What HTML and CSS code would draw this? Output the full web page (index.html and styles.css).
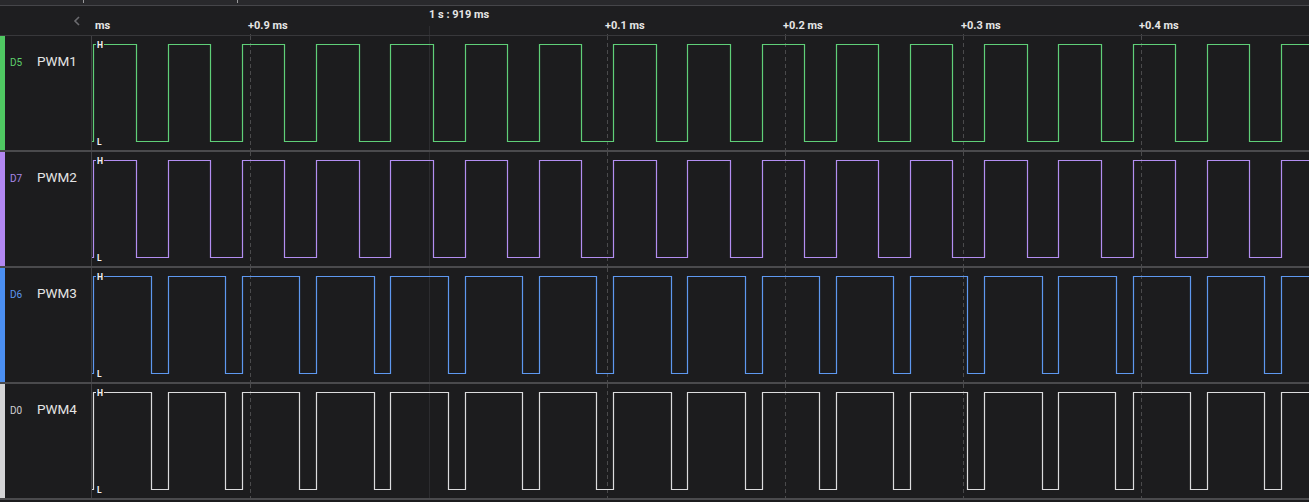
FILE: index.html
```
<!DOCTYPE html>
<html lang="en">
<head>
<meta charset="utf-8">
<title>Logic analyzer</title>
<link rel="stylesheet" href="styles.css">
</head>
<body>
<div class="top"><span class="mark m1"></span><span class="mark m2"></span></div>
<div class="header">
  <div class="hlabel">
    <svg class="chev" width="8" height="10" viewBox="0 0 8 10"><polyline points="6,1 2,5 6,9" /></svg>
  </div>
  <div class="axis">
    <svg class="axis-grid" width="1217" height="29" viewBox="92 0 1217 29">
      <line class="dash" x1="250.5" y1="21" x2="250.5" y2="29"/>
      <line class="ref" x1="429.5" y1="20" x2="429.5" y2="29"/>
      <line class="dash" x1="607.5" y1="21" x2="607.5" y2="29"/>
      <line class="dash" x1="785.5" y1="21" x2="785.5" y2="29"/>
      <line class="dash" x1="963.5" y1="21" x2="963.5" y2="29"/>
      <line class="dash" x1="1141.5" y1="21" x2="1141.5" y2="29"/>
    </svg>
    <span class="tick t-ms">ms</span>
    <span class="tick t-09">+0.9 ms</span>
    <span class="tick ref-label">1 s : 919 ms</span>
    <span class="tick t-01">+0.1 ms</span>
    <span class="tick t-02">+0.2 ms</span>
    <span class="tick t-03">+0.3 ms</span>
    <span class="tick t-04">+0.4 ms</span>
  </div>
</div>

<div class="row green">
  <div class="label"><span class="ch">D5</span><span class="name">PWM1</span></div>
  <svg class="plot" width="1217" height="114" viewBox="92 0 1217 114">
    <g class="grid">
      <line class="ref" x1="429.5" y1="0" x2="429.5" y2="114"/>
      <line class="dash" x1="250.5" y1="0" x2="250.5" y2="114"/>
      <line class="dash" x1="607.5" y1="0" x2="607.5" y2="114"/>
      <line class="dash" x1="785.5" y1="0" x2="785.5" y2="114"/>
      <line class="dash" x1="963.5" y1="0" x2="963.5" y2="114"/>
      <line class="dash" x1="1141.5" y1="0" x2="1141.5" y2="114"/>
    </g>
    <path class="sig" d="M92 105.5 H93.5 V8.5 H136.5 V105.5 H168.5 V8.5 H210.5 V105.5 H242.5 V8.5 H284.5 V105.5 H316.5 V8.5 H359.5 V105.5 H390.5 V8.5 H433.5 V105.5 H465.5 V8.5 H507.5 V105.5 H539.5 V8.5 H581.5 V105.5 H613.5 V8.5 H656.5 V105.5 H687.5 V8.5 H730.5 V105.5 H762.5 V8.5 H804.5 V105.5 H836.5 V8.5 H878.5 V105.5 H910.5 V8.5 H952.5 V105.5 H984.5 V8.5 H1027.5 V105.5 H1058.5 V8.5 H1101.5 V105.5 H1133.5 V8.5 H1175.5 V105.5 H1207.5 V8.5 H1249.5 V105.5 H1281.5 V8.5 H1312"/>
    <rect class="lvl-bg" x="96" y="5" width="8" height="7"/>
    <text class="lvl" x="97" y="11.5">H</text>
    <text class="lvl" x="97" y="109">L</text>
  </svg>
</div>

<div class="row purple">
  <div class="label"><span class="ch">D7</span><span class="name">PWM2</span></div>
  <svg class="plot" width="1217" height="114" viewBox="92 0 1217 114">
    <g class="grid">
      <line class="ref" x1="429.5" y1="0" x2="429.5" y2="114"/>
      <line class="dash" x1="250.5" y1="0" x2="250.5" y2="114"/>
      <line class="dash" x1="607.5" y1="0" x2="607.5" y2="114"/>
      <line class="dash" x1="785.5" y1="0" x2="785.5" y2="114"/>
      <line class="dash" x1="963.5" y1="0" x2="963.5" y2="114"/>
      <line class="dash" x1="1141.5" y1="0" x2="1141.5" y2="114"/>
    </g>
    <path class="sig" d="M92 105.5 H93.5 V8.5 H136.5 V105.5 H168.5 V8.5 H210.5 V105.5 H242.5 V8.5 H284.5 V105.5 H316.5 V8.5 H359.5 V105.5 H390.5 V8.5 H433.5 V105.5 H465.5 V8.5 H507.5 V105.5 H539.5 V8.5 H581.5 V105.5 H613.5 V8.5 H656.5 V105.5 H687.5 V8.5 H730.5 V105.5 H762.5 V8.5 H804.5 V105.5 H836.5 V8.5 H878.5 V105.5 H910.5 V8.5 H952.5 V105.5 H984.5 V8.5 H1027.5 V105.5 H1058.5 V8.5 H1101.5 V105.5 H1133.5 V8.5 H1175.5 V105.5 H1207.5 V8.5 H1249.5 V105.5 H1281.5 V8.5 H1312"/>
    <rect class="lvl-bg" x="96" y="5" width="8" height="7"/>
    <text class="lvl" x="97" y="11.5">H</text>
    <text class="lvl" x="97" y="109">L</text>
  </svg>
</div>

<div class="row blue">
  <div class="label"><span class="ch">D6</span><span class="name">PWM3</span></div>
  <svg class="plot" width="1217" height="114" viewBox="92 0 1217 114">
    <g class="grid">
      <line class="ref" x1="429.5" y1="0" x2="429.5" y2="114"/>
      <line class="dash" x1="250.5" y1="0" x2="250.5" y2="114"/>
      <line class="dash" x1="607.5" y1="0" x2="607.5" y2="114"/>
      <line class="dash" x1="785.5" y1="0" x2="785.5" y2="114"/>
      <line class="dash" x1="963.5" y1="0" x2="963.5" y2="114"/>
      <line class="dash" x1="1141.5" y1="0" x2="1141.5" y2="114"/>
    </g>
    <path class="sig" d="M92 105.5 H93.5 V8.5 H151.5 V105.5 H168.5 V8.5 H225.5 V105.5 H242.5 V8.5 H299.5 V105.5 H316.5 V8.5 H374.5 V105.5 H390.5 V8.5 H448.5 V105.5 H465.5 V8.5 H522.5 V105.5 H539.5 V8.5 H596.5 V105.5 H613.5 V8.5 H671.5 V105.5 H687.5 V8.5 H745.5 V105.5 H762.5 V8.5 H819.5 V105.5 H836.5 V8.5 H893.5 V105.5 H910.5 V8.5 H967.5 V105.5 H984.5 V8.5 H1042.5 V105.5 H1058.5 V8.5 H1116.5 V105.5 H1133.5 V8.5 H1190.5 V105.5 H1207.5 V8.5 H1264.5 V105.5 H1281.5 V8.5 H1312"/>
    <rect class="lvl-bg" x="96" y="5" width="8" height="7"/>
    <text class="lvl" x="97" y="11.5">H</text>
    <text class="lvl" x="97" y="109">L</text>
  </svg>
</div>

<div class="row grey">
  <div class="label"><span class="ch">D0</span><span class="name">PWM4</span></div>
  <svg class="plot" width="1217" height="114" viewBox="92 0 1217 114">
    <g class="grid">
      <line class="ref" x1="429.5" y1="0" x2="429.5" y2="114"/>
      <line class="dash" x1="250.5" y1="0" x2="250.5" y2="114"/>
      <line class="dash" x1="607.5" y1="0" x2="607.5" y2="114"/>
      <line class="dash" x1="785.5" y1="0" x2="785.5" y2="114"/>
      <line class="dash" x1="963.5" y1="0" x2="963.5" y2="114"/>
      <line class="dash" x1="1141.5" y1="0" x2="1141.5" y2="114"/>
    </g>
    <path class="sig" d="M92 105.5 H93.5 V8.5 H151.5 V105.5 H168.5 V8.5 H225.5 V105.5 H242.5 V8.5 H299.5 V105.5 H316.5 V8.5 H374.5 V105.5 H390.5 V8.5 H448.5 V105.5 H465.5 V8.5 H522.5 V105.5 H539.5 V8.5 H596.5 V105.5 H613.5 V8.5 H671.5 V105.5 H687.5 V8.5 H745.5 V105.5 H762.5 V8.5 H819.5 V105.5 H836.5 V8.5 H893.5 V105.5 H910.5 V8.5 H967.5 V105.5 H984.5 V8.5 H1042.5 V105.5 H1058.5 V8.5 H1115.5 V105.5 H1133.5 V8.5 H1190.5 V105.5 H1207.5 V8.5 H1264.5 V105.5 H1281.5 V8.5 H1312"/>
    <rect class="lvl-bg" x="96" y="5" width="8" height="7"/>
    <text class="lvl" x="97" y="11.5">H</text>
    <text class="lvl" x="97" y="109">L</text>
  </svg>
</div>
</body>
</html>
```
FILE: styles.css
```
html, body {
  margin: 0;
  padding: 0;
  background: #1c1c1e;
  font-family: Roboto, "Liberation Sans", sans-serif;
  overflow: hidden;
}

.top {
  height: 5px;
  background: #29292c;
  border-bottom: 1px solid #46464a;
  display: flex;
  align-items: flex-start;
}
.mark {
  display: block;
  width: 1px;
  height: 3px;
  background: #9a9a9c;
}
.m1 { margin-left: 83px; }
.m2 { margin-left: 153px; }

.header {
  height: 29px;
  display: flex;
  background: #1e1e20;
  border-bottom: 1px solid #38383b;
}
.hlabel {
  width: 92px;
  flex: none;
  box-sizing: border-box;
  display: flex;
  justify-content: flex-end;
  align-items: flex-start;
  padding-top: 10px;
  padding-right: 11px;
}
.chev polyline {
  fill: none;
  stroke: #6c6c70;
  stroke-width: 1.6;
}
.axis {
  position: relative;
  flex: 1;
}
.axis-grid {
  position: absolute;
  left: 0;
  top: 0;
}
.tick {
  position: absolute;
  top: 14px;
  font-size: 11px;
  font-weight: 700;
  color: #e6e6e6;
  line-height: 12px;
  white-space: nowrap;
  background: #1e1e20;
}
.t-ms { left: 3px; }
.t-09 { left: 156px; }
.ref-label { left: 337px; top: 3px; }
.t-01 { left: 513px; }
.t-02 { left: 691px; }
.t-03 { left: 869px; }
.t-04 { left: 1047px; }

.row {
  height: 114px;
  display: flex;
  border-bottom: 2px solid #4a4a4d;
}
.label {
  flex: none;
  box-sizing: border-box;
  width: 92px;
  border-left: 5px solid #888;
  border-right: 1px solid #404043;
  display: flex;
  align-items: flex-start;
  padding-top: 17px;
  padding-left: 5px;
}
.ch {
  font-size: 10px;
  width: 27px;
  line-height: 14px;
  padding-top: 3px;
}
.name {
  font-size: 13.5px;
  color: #e4e4e4;
  line-height: 16px;
}
.plot {
  display: block;
  flex: none;
}
.grid .dash,
.axis-grid .dash {
  stroke: #4a4a4c;
  stroke-width: 1;
  stroke-dasharray: 4 3;
}
.ref {
  stroke: #2c2c2f;
  stroke-width: 1;
}
.sig {
  fill: none;
  stroke-width: 1.2;
}
.lvl-bg {
  fill: #1c1c1e;
}
.lvl {
  font-family: Roboto, "Liberation Sans", sans-serif;
  font-size: 8.5px;
  font-weight: 700;
  fill: #f2f2f2;
}

.green .label { border-left-color: #4fc862; }
.green .ch { color: #5ccf6c; }
.green .sig { stroke: #5fcf78; }

.purple .label { border-left-color: #b287f2; }
.purple .ch { color: #a887e6; }
.purple .sig { stroke: #b38ef2; }

.blue .label { border-left-color: #4b8ff2; }
.blue .ch { color: #5b96ee; }
.blue .sig { stroke: #5e98f0; }

.grey .label { border-left-color: #d4d4d6; }
.grey .ch { color: #cfcfd1; }
.grey .sig { stroke: #dcdcde; }
```
